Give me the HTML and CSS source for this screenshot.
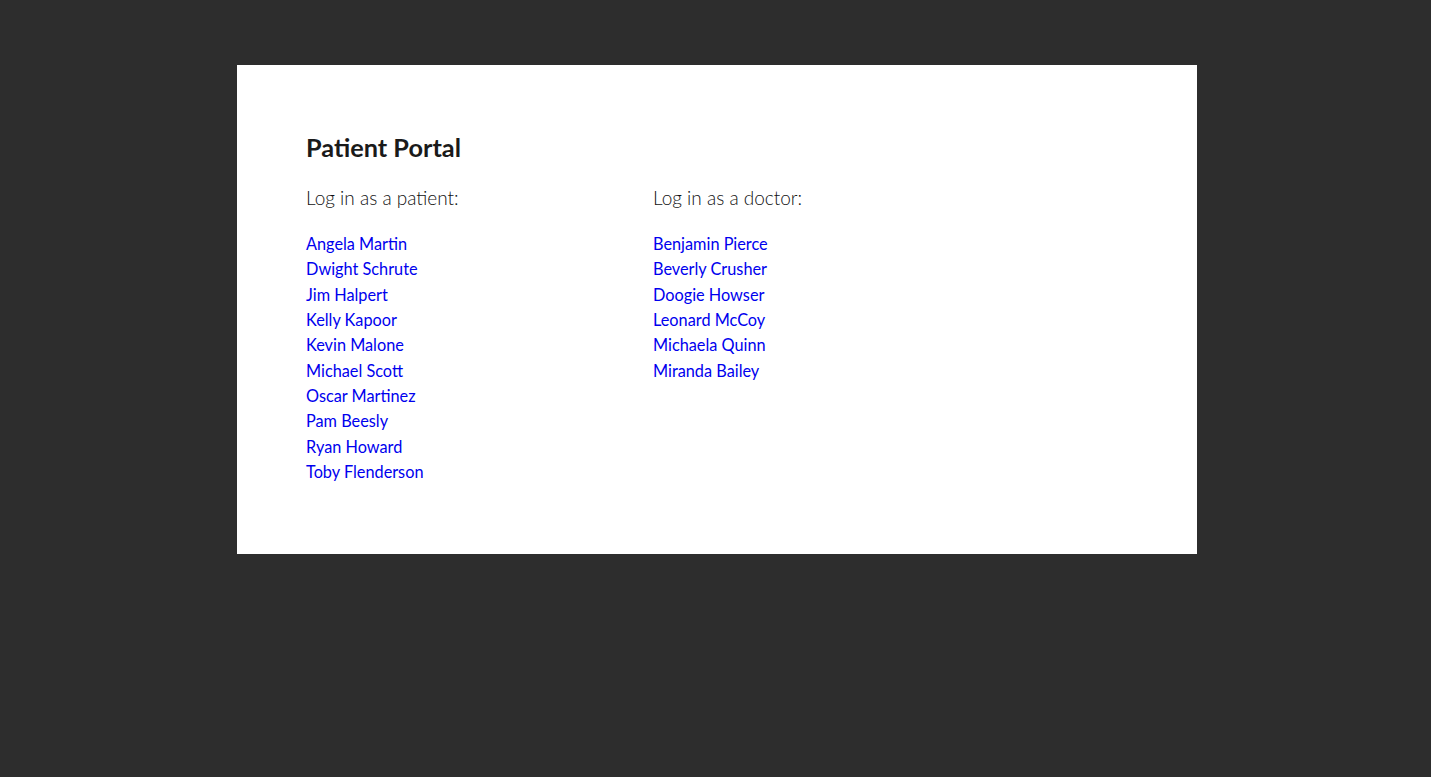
FILE: index.html
```html
<!DOCTYPE html>
<html>
<head>
<meta charset="utf-8">
<link rel="stylesheet" href="styles.css">
</head>
<body>
<main class="card">
  <h1 class="title">Patient Portal</h1>
  <div class="columns">
    <section class="col">
      <h2 class="subtitle">Log in as a patient:</h2>
      <ul class="list">
        <li><a href="#">Angela Martin</a></li>
        <li><a href="#">Dwight Schrute</a></li>
        <li><a href="#">Jim Halpert</a></li>
        <li><a href="#">Kelly Kapoor</a></li>
        <li><a href="#">Kevin Malone</a></li>
        <li><a href="#">Michael Scott</a></li>
        <li><a href="#">Oscar Martinez</a></li>
        <li><a href="#">Pam Beesly</a></li>
        <li><a href="#">Ryan Howard</a></li>
        <li><a href="#">Toby Flenderson</a></li>
      </ul>
    </section>
    <section class="col">
      <h2 class="subtitle">Log in as a doctor:</h2>
      <ul class="list">
        <li><a href="#">Benjamin Pierce</a></li>
        <li><a href="#">Beverly Crusher</a></li>
        <li><a href="#">Doogie Howser</a></li>
        <li><a href="#">Leonard McCoy</a></li>
        <li><a href="#">Michaela Quinn</a></li>
        <li><a href="#">Miranda Bailey</a></li>
      </ul>
    </section>
  </div>
</main>
</body>
</html>
```

FILE: styles.css
```css
html, body {
  margin: 0;
  padding: 0;
  background: #2d2d2d;
  font-family: "Lato", "Liberation Sans", sans-serif;
}
body {
  padding-top: 65px;
  min-height: 777px;
  box-sizing: border-box;
}
.card {
  width: 960px;
  height: 489px;
  box-sizing: border-box;
  margin: 0 0 0 237px;
  background: #fff;
  padding: 66px 69px 0 69px;
}
.title {
  margin: 0;
  font-size: 25.3px;
  line-height: 32px;
  font-weight: 700;
  color: #1a1a1a;
}
.columns {
  display: flex;
  margin-top: 21px;
}
.col {
  width: 347px;
}
.subtitle {
  margin: 0;
  font-size: 19px;
  line-height: 28px;
  font-weight: 300;
  color: #111;
}
.list {
  list-style: none;
  margin: 19px 0 0;
  padding: 0;
}
.list li {
  font-size: 16.3px;
  line-height: 25.33px;
}
.list a {
  color: #0000ee;
  text-decoration: none;
}
```
